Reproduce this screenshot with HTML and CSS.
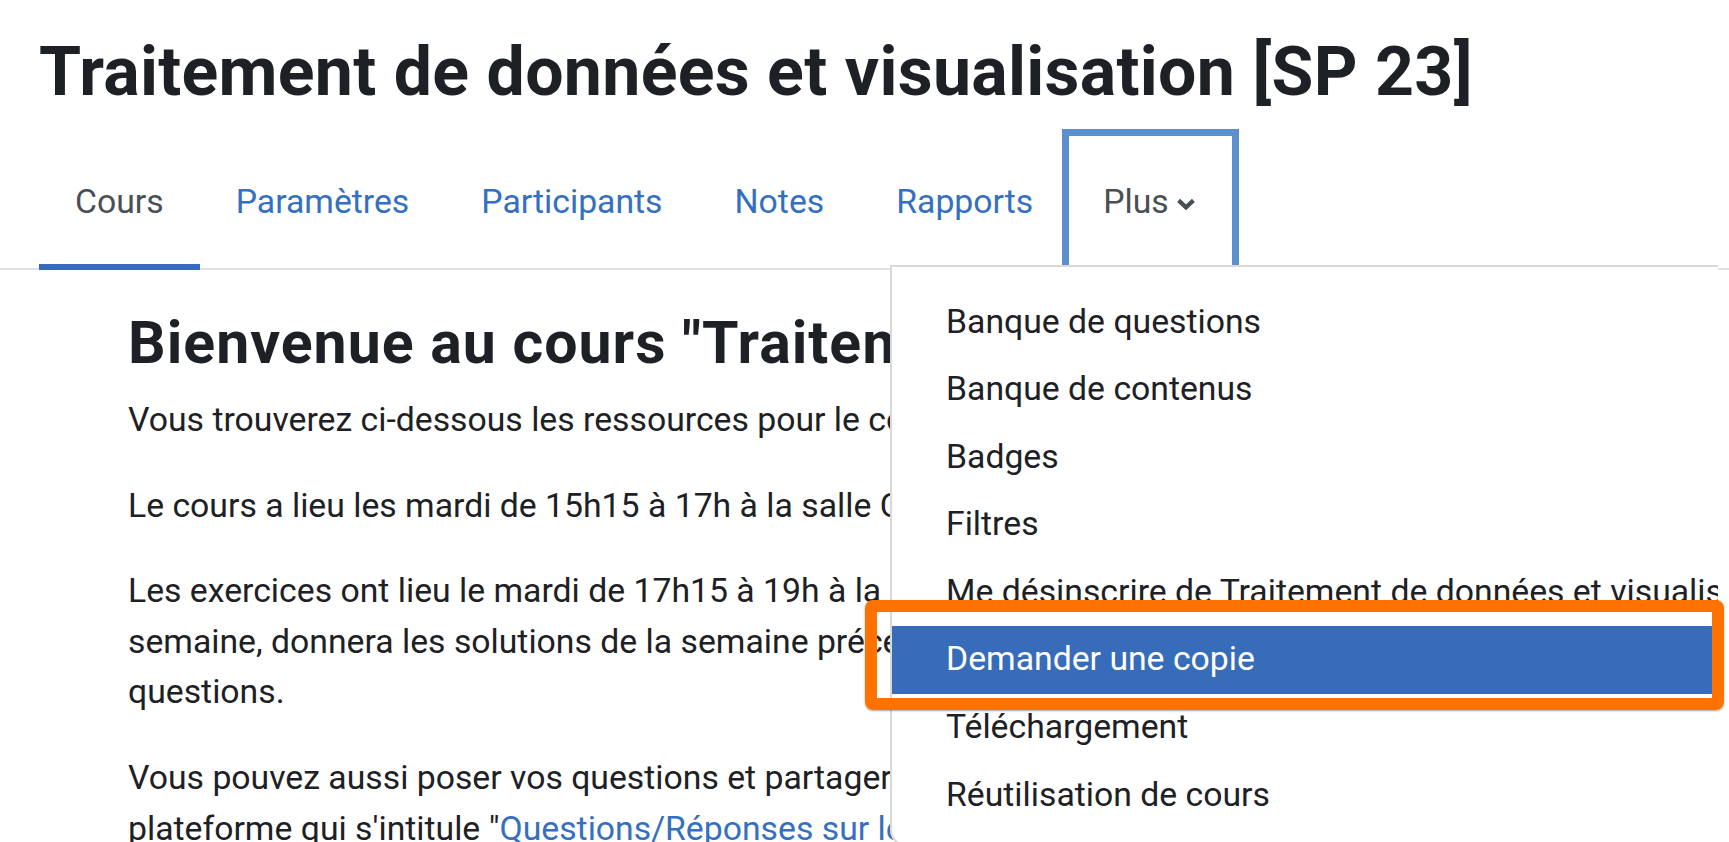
FILE: index.html
```html
<!DOCTYPE html>
<html lang="fr">
<head>
<meta charset="utf-8">
<title>Traitement de données et visualisation [SP 23]</title>
<link rel="stylesheet" href="styles.css">
</head>
<body>
<div class="page">
  <header class="page-header">
    <h1 class="page-title">Traitement de données et visualisation [SP 23]</h1>
  </header>

  <nav class="secondary-nav">
    <ul class="tabs">
      <li class="tab"><a class="tab-link active" href="#">Cours</a></li>
      <li class="tab"><a class="tab-link" href="#">Paramètres</a></li>
      <li class="tab"><a class="tab-link" href="#">Participants</a></li>
      <li class="tab"><a class="tab-link" href="#">Notes</a></li>
      <li class="tab"><a class="tab-link" href="#">Rapports</a></li>
      <li class="tab"><a class="tab-link more focused" href="#">Plus<svg class="chevron" viewBox="0 0 20 12" width="20" height="12" aria-hidden="true"><path d="M2.6 2.4 L10 9.4 L17.4 2.4" fill="none" stroke="#4a4f55" stroke-width="4.2" stroke-linejoin="miter"/></svg></a></li>
    </ul>
  </nav>

  <main class="course-content">
    <h2 class="summary-title">Bienvenue au cours "Traitement de données et visualisation"</h2>
    <p>Vous trouverez ci-dessous les ressources pour le cours de traitement de données.</p>
    <p>Le cours a lieu les mardi de 15h15 à 17h à la salle CM 1 4.</p>
    <p>Les exercices ont lieu le mardi de 17h15 à 19h à la salle CM 1 4. L'assistant, présent chaque<br>semaine, donnera les solutions de la semaine précédente et répondra à vos<br>questions.</p>
    <p>Vous pouvez aussi poser vos questions et partager vos remarques sur la<br>plateforme qui s'intitule "<a class="link" href="#">Questions/Réponses sur le cours</a>".</p>
  </main>

  <div class="dropdown-menu">
    <a class="dropdown-item" href="#">Banque de questions</a>
    <a class="dropdown-item" href="#">Banque de contenus</a>
    <a class="dropdown-item" href="#">Badges</a>
    <a class="dropdown-item" href="#">Filtres</a>
    <a class="dropdown-item" href="#">Me désinscrire de Traitement de données et visualisation [SP 23]</a>
    <a class="dropdown-item selected" href="#">Demander une copie</a>
    <a class="dropdown-item" href="#">Téléchargement</a>
    <a class="dropdown-item" href="#">Réutilisation de cours</a>
  </div>

  <div class="annotation"></div>
</div>
</body>
</html>
```

FILE: styles.css
```css
html, body {
  margin: 0;
  padding: 0;
  overflow: hidden;
  background: #ffffff;
}

body {
  font-family: Roboto, "Liberation Sans", Arial, sans-serif;
  font-size: 33.75px;
  line-height: 50.6px;
  color: #1d2125;
}

.page {
  position: relative;
  width: 1729px;
  height: 842px;
  overflow: hidden;
}

.page-header {
  padding: 32px 0 0 39px;
}

.page-title {
  margin: 0;
  font-size: 68px;
  line-height: 81px;
  font-weight: 700;
  letter-spacing: 0.3px;
  color: #1d2125;
  white-space: nowrap;
}

.secondary-nav {
  margin-top: 23px;
}

.tabs {
  display: flex;
  margin: 0;
  padding: 0 0 0 39px;
  list-style: none;
  border-bottom: 2px solid #dee2e6;
}

.tab {
  display: flex;
}

.tab-link {
  display: flex;
  align-items: center;
  box-sizing: border-box;
  height: 134px;
  margin-bottom: -2px;
  padding: 4px 36px 0;
  border-bottom: 6px solid transparent;
  color: #3570c0;
  text-decoration: none;
  white-space: nowrap;
}

.tab-link.active {
  color: #4a4f55;
  border-bottom-color: #366cb9;
}

.tab-link.more {
  color: #4a4f55;
  padding-left: 34px;
}

.tab-link.focused {
  box-shadow: 0 0 0 7px #5b8fce;
}

.chevron {
  margin-left: 7px;
  margin-top: 4px;
}

.course-content {
  box-sizing: border-box;
  width: 1560px;
  padding: 39px 0 0 128px;
  overflow: hidden;
}

.summary-title {
  margin: 0 0 18.5px;
  font-size: 59px;
  line-height: 67.5px;
  font-weight: 700;
  letter-spacing: 1px;
  white-space: nowrap;
}

.course-content p {
  margin: 0 0 35px;
  white-space: nowrap;
}

.link {
  color: #3570c0;
  text-decoration: none;
}

.dropdown-menu {
  position: absolute;
  left: 890px;
  top: 265px;
  width: 828px;
  box-sizing: border-box;
  padding: 21px 0 15px;
  background: #ffffff;
  border: 2px solid #d9d9d9;
  border-right: none;
  border-radius: 0 0 0 16px;
  overflow: hidden;
}

.dropdown-item {
  display: block;
  padding: 8.5px 54px;
  line-height: 50.6px;
  color: #1d2125;
  text-decoration: none;
  white-space: nowrap;
}

.dropdown-item.selected {
  background: #366cb9;
  color: #ffffff;
}

.annotation {
  position: absolute;
  left: 865px;
  top: 600px;
  width: 859px;
  height: 110px;
  box-sizing: border-box;
  border: 12px solid #ff7200;
  border-radius: 8px;
  box-shadow: 0 1px 2px rgba(0, 0, 0, 0.35);
}
```
